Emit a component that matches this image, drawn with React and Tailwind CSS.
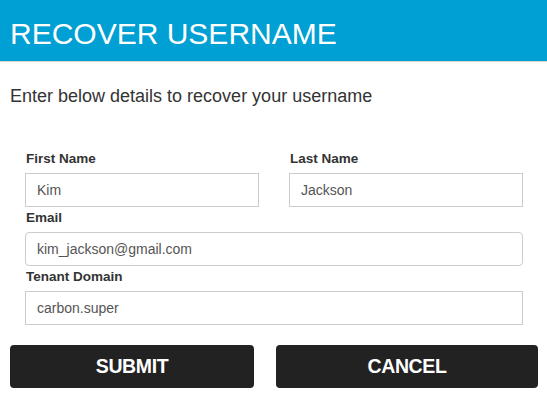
export default function App() {
  return (
    <div className="w-[547px] h-[405px] bg-white font-['Liberation_Sans',Arial,sans-serif] overflow-hidden">
      <header className="h-[62px] bg-[#009fd4] border-b border-[#d6d6d6] flex items-center px-[10px]">
        <h1 className="text-white text-[30px] leading-none pt-[6px]">RECOVER USERNAME</h1>
      </header>

      <p className="px-[10px] mt-[24px] text-[18px] leading-5 text-[#333]">
        Enter below details to recover your username
      </p>

      <form className="pl-[25px] pr-[24px] mt-[42px]">
        <div className="flex gap-[30px]">
          <Field label="First Name" value="Kim" className="w-[234px]" />
          <Field label="Last Name" value="Jackson" className="flex-1" />
        </div>
        <Field label="Email" value="kim_jackson@gmail.com" rounded />
        <Field label="Tenant Domain" value="carbon.super" />
      </form>

      <div className="flex justify-between pl-[10px] pr-[9px] mt-[20px]">
        <button className="w-[244px] h-[43px] rounded-[4px] bg-[#222] text-white font-bold text-[19.5px] tracking-[-0.4px]">SUBMIT</button>
        <button className="w-[262px] h-[43px] rounded-[4px] bg-[#222] text-white font-bold text-[19.5px] tracking-[-0.4px]">CANCEL</button>
      </div>
    </div>
  );
}

function Field({ label, value, className = '', rounded }) {
  return (
    <div className={className}>
      <label className="block pl-[1px] h-[25px] pt-[3px] text-[13.5px] font-bold text-[#333] leading-[15px]">{label}</label>
      <input
        readOnly
        value={value}
        className={`block w-full h-[34px] border border-[#ccc] bg-white px-[11px] text-[14px] text-[#555] outline-none ${rounded ? 'rounded-[4px]' : ''}`}
      />
    </div>
  );
}
